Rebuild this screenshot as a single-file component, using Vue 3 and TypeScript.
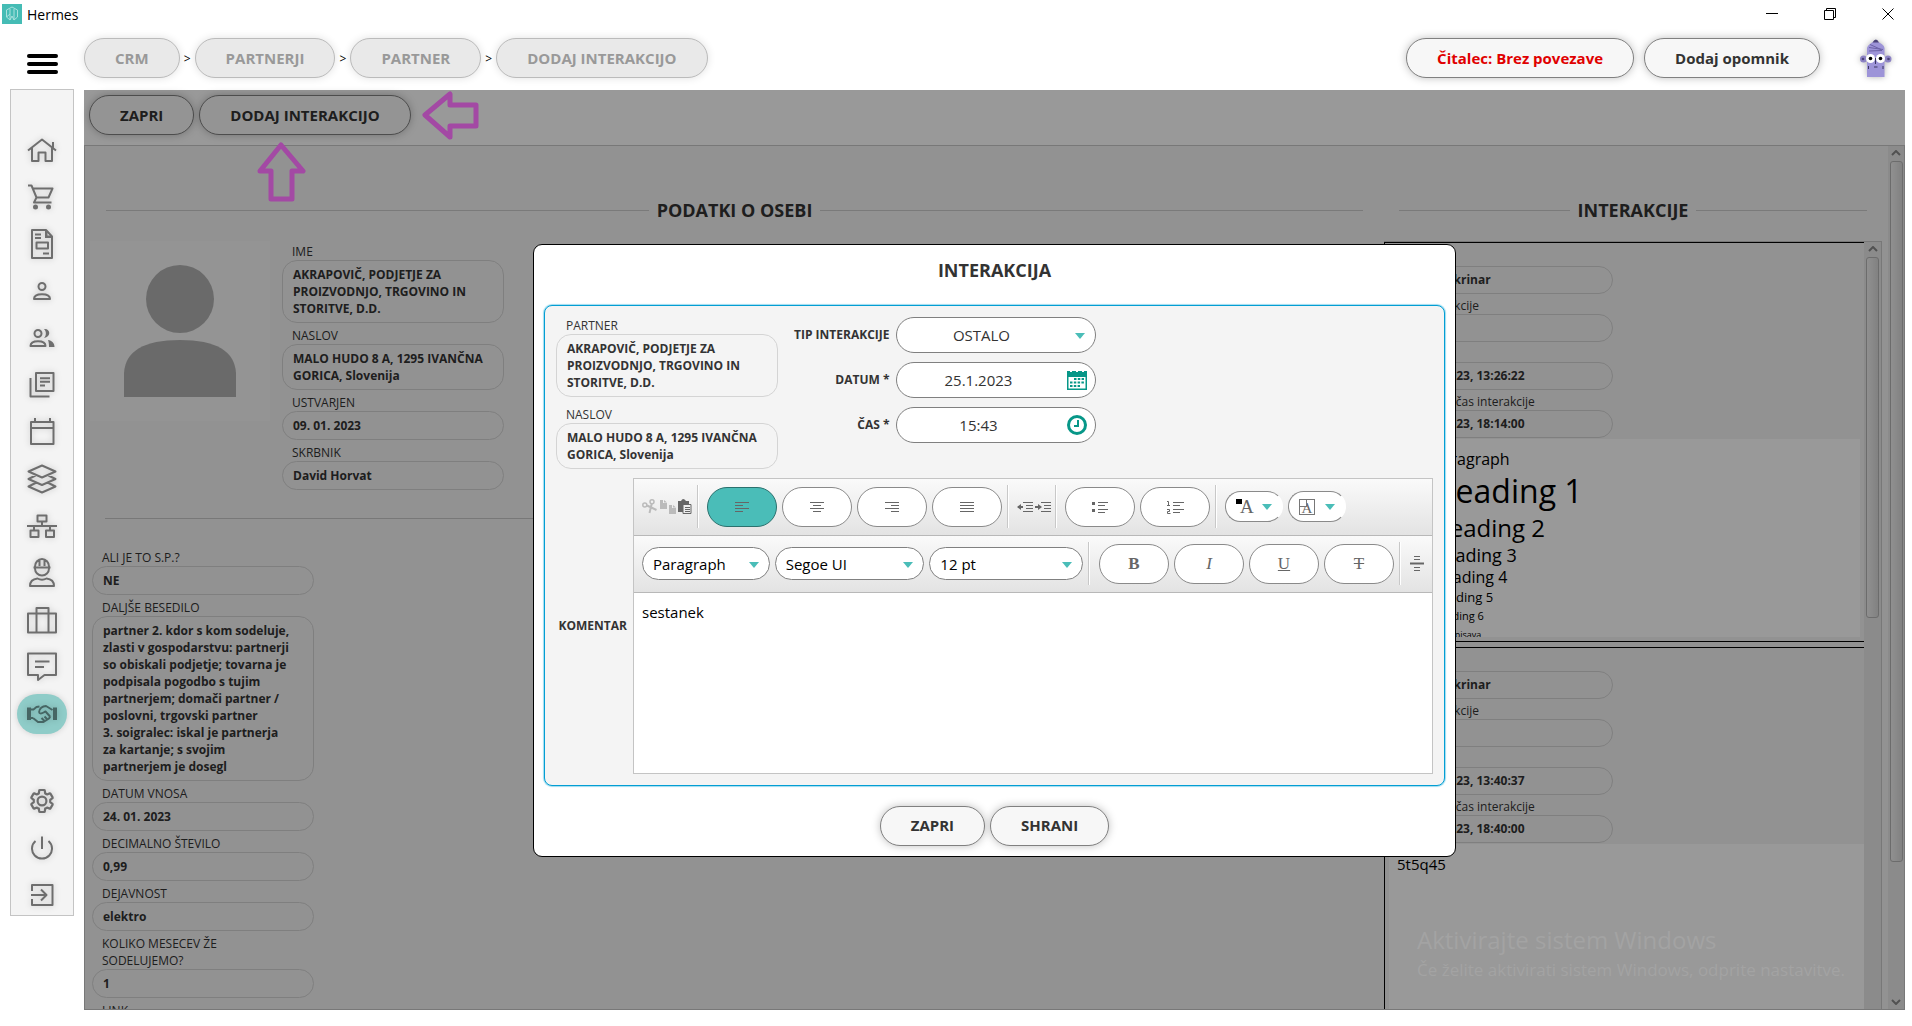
<script setup lang="ts">
import { ref } from 'vue'

interface Field {
  label: string
  value: string
}
interface NavItem {
  name: string
  line?: string
  fill?: string
  active?: boolean
}

const crumbs = ['CRM', 'PARTNERJI', 'PARTNER', 'DODAJ INTERAKCIJO']

const gear =
  'M19.43 12.98c.04-.32.07-.64.07-.98 0-.34-.03-.66-.07-.98l2.11-1.65c.19-.15.24-.42.12-.64l-2-3.46c-.09-.16-.26-.25-.44-.25-.06 0-.12.01-.17.03l-2.49 1c-.52-.4-1.08-.73-1.69-.98l-.38-2.65C14.46 2.18 14.25 2 14 2h-4c-.25 0-.46.18-.49.42l-.38 2.65c-.61.25-1.17.59-1.69.98l-2.49-1c-.06-.02-.12-.03-.18-.03-.17 0-.34.09-.43.25l-2 3.46c-.13.22-.07.49.12.64l2.11 1.65c-.04.32-.07.65-.07.98 0 .33.03.66.07.98l-2.11 1.65c-.19.15-.24.42-.12.64l2 3.46c.09.16.26.25.44.25.06 0 .12-.01.17-.03l2.49-1c.52.4 1.08.73 1.69.98l.38 2.65c.03.24.24.42.49.42h4c.25 0 .46-.18.49-.42l.38-2.65c.61-.25 1.17-.59 1.69-.98l2.49 1c.06.02.12.03.18.03.17 0 .34-.09.43-.25l2-3.46c.12-.22.07-.49-.12-.64l-2.11-1.65z'

const topNav: NavItem[] = [
  { name: 'Domov', line: 'M1 15.500L15 4.500L29 15.500M5 13v13h6.500v-8.500h7V26H25V13M26 12.500V7' },
  {
    name: 'Prodaja',
    line: 'M1 3.500h3.500l5 12h12l4-9H6M9.500 15.500L7 20.500h17.500',
    fill: 'M6 25a2.500 2.500 0 1 0 5 0a2.500 2.500 0 1 0 -5 0M19 25a2.500 2.500 0 1 0 5 0a2.500 2.500 0 1 0 -5 0',
  },
  {
    name: 'Računi',
    line: 'M5 1h14l6 6.500V29H5zM8 5.500h6M8 9h6M9.500 13.500h11.500v6H9.500zM16 24.500h6',
    fill: 'M18 1v8h8l-2-2.500h-3.500V3z',
  },
  { name: 'Oseba', line: 'M11.500 10.500a3.500 3.500 0 1 0 7 0a3.500 3.500 0 1 0 -7 0M7 23c0-3.800 4-4.800 8-4.800s8 1 8 4.800z' },
  {
    name: 'Osebe',
    line: 'M7.500 10.500a3.500 3.500 0 1 0 7 0a3.500 3.500 0 1 0 -7 0M3.500 23c0-3.800 4-4.800 7.500-4.800s7.500 1 7.500 4.800z',
    fill: 'M17 6c6-1 8 7.500 0 9c2.500-2.500 2.500-6.500 0-9M21 17c4 .8 6.500 3 6.500 7H22c0-3-.2-5-1-7',
  },
  { name: 'Članki', line: 'M9 3h17.500v18H9zM3.500 8v18.500H22.500M13 8.200h10M13 11.800h10M13 15.400h5' },
  { name: 'Koledar', line: 'M4 5h22.500v22H4zM4 11h22M8 1v4M23 1v4' },
  {
    name: 'Sloji',
    line: 'M15 1.500L28.500 7.500L15 13.500L1.500 7.500zM8.500 11.500L1.500 15L15 21L28.500 15L21.500 11.500M8.500 19L1.500 22.500L15 28.500L28.500 22.500L21.500 19',
  },
  { name: 'Struktura', line: 'M10.500 4.500h9v6h-9zM0 15h30M15 11v4M7 15v4M23 15v4M3.500 19.500h8v6.500h-8zM19 19.500h8v6.500h-8z' },
  {
    name: 'Delavec',
    line: 'M8 8.500a7 7.500 0 0 1 14 0v2a7 7 0 0 1 -14 0zM6.500 9.500h17M12.500 2v6M17.500 2v6M3 28c0-5 3-7 7.500-7.500q4.500 2.500 9 0c4.500.5 7.500 2.500 7.500 7.500z',
  },
  { name: 'Kovček', line: 'M1 8.500h28v19H1zM9.500 27V3h12v24' },
  { name: 'Sporočila', line: 'M1 1.500h28v21.500H17.500l-6.500 5v-5H1zM8 9.500h14.500M8 15h9' },
  {
    name: 'Partnerji',
    line: 'M4 10.500h2.500l3-2.500l3-.5M6 19l5 4h5.500l5.500-3.500l1.500-2.500M12 13.500c0-4 3.500-6.500 7-6.500l6.500 4M12 13.500c2 2.500 4 0 6.500-1l4.500 5M14.500 19l3 3M17.500 17.500l3 3M4 19h2',
    fill: 'M0 8.500h4v12.500H0zM26 8.500h4v12.500h-4z',
    active: true,
  },
]
const bottomNav: NavItem[] = [
  { name: 'Nastavitve' },
  { name: 'Odjava', line: 'M8.500 8a10 10 0 1 0 13 0M15 3.500v12.500' },
  { name: 'Izhod', line: 'M5 11V5h20.500v20H5v-6M4 15h15M14 9.500l5.500 5.500l-5.500 5.500' },
]

const personFields: Field[] = [
  { label: 'IME', value: 'AKRAPOVIČ, PODJETJE ZA PROIZVODNJO, TRGOVINO IN STORITVE, D.D.' },
  { label: 'NASLOV', value: 'MALO HUDO 8 A, 1295 IVANČNA GORICA, Slovenija' },
  { label: 'USTVARJEN', value: '09. 01. 2023' },
  { label: 'SKRBNIK', value: 'David Horvat' },
]
const modalFields: Field[] = [
  { label: 'PARTNER', value: personFields[0].value },
  { label: 'NASLOV', value: personFields[1].value },
]
const detailFields: Field[] = [
  { label: 'ALI JE TO S.P.?', value: 'NE' },
  {
    label: 'DALJŠE BESEDILO',
    value:
      'partner 2. kdor s kom sodeluje, zlasti v gospodarstvu: partnerji so obiskali podjetje; tovarna je podpisala pogodbo s tujim partnerjem; domači partner / poslovni, trgovski partner\n3. soigralec: iskal je partnerja\nza kartanje; s svojim\npartnerjem je dosegl',
  },
  { label: 'DATUM VNOSA', value: '24. 01. 2023' },
  { label: 'DECIMALNO ŠTEVILO', value: '0,99' },
  { label: 'DEJAVNOST', value: 'elektro' },
  { label: 'KOLIKO MESECEV ŽE SODELUJEMO?', value: '1' },
  { label: 'LINK', value: '' },
]

const cardFields = (created: string, time: string): Field[] => [
  { label: 'Avtor', value: 'Mateja Škrinar' },
  { label: 'Tip interakcije', value: 'Ostalo' },
  { label: 'Vnos', value: created },
  { label: 'Datum in čas interakcije', value: time },
]
const firstCard = cardFields('24. 01. 2023, 13:26:22', '24. 01. 2023, 18:14:00')
const secondCard = cardFields('24. 01. 2023, 13:40:37', '24. 01. 2023, 18:40:00')

const aligns = [
  { name: 'Levo', d: 'M0 .5h14M0 3.500h8M0 6.500h14M0 9.500h8' },
  { name: 'Sredina', d: 'M0 .5h14M3 3.500h8M0 6.500h14M3 9.500h8' },
  { name: 'Desno', d: 'M0 .5h14M6 3.500h8M0 6.500h14M6 9.500h8' },
  { name: 'Obojestransko', d: 'M0 .5h14M0 3.500h14M0 6.500h14M0 9.500h14' },
]
const align = ref('Levo')
const comment = ref('sestanek')
const date = ref('25.1.2023')
const time = ref('15:43')
</script>

<template>
  <div class="app">
    <header class="titlebar">
      <svg class="logo" viewBox="0 0 20 20" width="20" height="20">
        <rect width="20" height="20" fill="#45bcb5" />
        <path d="M10 3L4.500 6v7L8 16V5M8 16l2-4l2 4V5M10 3l5.500 3v7L12 16M4.500 13L8 10" fill="none" stroke="#a9e2de" />
      </svg>
      <span class="app-name">Hermes</span>
      <div class="window-controls">
        <button aria-label="Pomanjšaj"><svg width="12" height="12"><path d="M0 5.500h12" /></svg></button>
        <button aria-label="Obnovi"><svg width="12" height="12"><path d="M.5 2.500h9v9h-9zM2.500 2.500v-2h9v9h-2" /></svg></button>
        <button aria-label="Zapri okno"><svg width="12" height="12"><path d="M.5 .5l11 11M11.500 .5l-11 11" /></svg></button>
      </div>
    </header>

    <div class="topbar">
      <button class="menu" aria-label="Meni"><i></i><i></i><i></i></button>
      <nav class="crumbs">
        <template v-for="(c, i) in crumbs" :key="c">
          <span v-if="i" class="crumb-sep">&gt;</span>
          <button class="pill crumb">{{ c }}</button>
        </template>
      </nav>
      <div class="top-actions">
        <button class="pill alert">Čitalec: Brez povezave</button>
        <button class="pill">Dodaj opomnik</button>
        <svg class="mascot" width="32" height="38" viewBox="0 0 32 38">
          <circle cx="3.500" cy="20" r="3.500" fill="#8d83c4" />
          <circle cx="28" cy="20" r="3.500" fill="#8d83c4" />
          <circle cx="3" cy="20" r="1.300" fill="#4b4379" />
          <circle cx="28.500" cy="20" r="1.300" fill="#4b4379" />
          <path d="M7 38V9q1-4 8.500-7Q24 5 24.500 9v29z" fill="#9d94d8" />
          <path d="M12.500 3.500q3.500-6 6.500 0z" fill="#4b4379" />
          <path d="M9 8.500l14 2M10 5.500l11 5M9 12l13-.5" fill="none" stroke="#6b61a6" />
          <circle cx="10.500" cy="19.500" r="4.500" fill="#fff" />
          <circle cx="20.500" cy="19.500" r="4.500" fill="#fff" />
          <circle cx="10.500" cy="19.500" r="1.800" />
          <circle cx="20.500" cy="19.500" r="1.800" />
          <path d="M15.500 19v6M14 28h3.500M8.500 27v3M23 27v3" fill="none" stroke="#3a3461" />
        </svg>
      </div>
    </div>

    <div class="body">
      <nav class="sidebar">
        <button v-for="n in topNav" :key="n.name" :aria-label="n.name" :class="{ active: n.active }">
          <svg width="30" height="30" viewBox="0 0 30 30">
            <path class="line" :d="n.line" />
            <path v-if="n.fill" class="solid" :d="n.fill" />
          </svg>
        </button>
        <span class="nav-gap"></span>
        <button v-for="n in bottomNav" :key="n.name" :aria-label="n.name">
          <svg width="30" height="30" viewBox="0 0 30 30">
            <path v-if="n.line" class="line" :d="n.line" />
            <g v-else transform="translate(1.800 1.800) scale(1.100)">
              <path class="line" :d="gear" />
              <circle class="line" cx="12" cy="12" r="4" />
            </g>
          </svg>
        </button>
      </nav>

      <main class="main">
        <div class="toolbar">
          <button class="pill">ZAPRI</button>
          <button class="pill">DODAJ INTERAKCIJO</button>
        </div>

        <div class="content">
          <div class="columns">
            <section class="person">
              <h2 class="section-title">PODATKI O OSEBI</h2>
              <div class="profile">
                <svg class="photo" width="180" height="180" viewBox="0 0 180 180">
                  <rect width="180" height="180" fill="#f7f7f7" />
                  <circle cx="90" cy="58" r="34" fill="#b1b1b1" />
                  <path d="M34 156v-24q2-33 56-33t56 33v24z" fill="#b1b1b1" />
                </svg>
                <dl class="fields">
                  <div v-for="f in personFields" :key="f.label">
                    <dt>{{ f.label }}</dt>
                    <dd>{{ f.value }}</dd>
                  </div>
                </dl>
              </div>
              <dl class="fields details">
                <div v-for="f in detailFields" :key="f.label">
                  <dt>{{ f.label }}</dt>
                  <dd>{{ f.value }}</dd>
                </div>
              </dl>
            </section>

            <section class="interactions">
              <h2 class="section-title">INTERAKCIJE</h2>
              <div class="list">
                <div class="cards">
                  <article class="card">
                    <dl class="fields compact">
                      <div v-for="f in firstCard" :key="f.label">
                        <dt>{{ f.label }}</dt>
                        <dd>{{ f.value }}</dd>
                      </div>
                    </dl>
                    <div class="rich sample">
                      <p>Paragraph</p>
                      <h1>Heading 1</h1>
                      <h2>Heading 2</h2>
                      <h3>Heading 3</h3>
                      <h4>Heading 4</h4>
                      <h5>Heading 5</h5>
                      <h6>Heading 6</h6>
                      <small>Mala pisava</small>
                    </div>
                  </article>
                  <article class="card tall">
                    <dl class="fields compact">
                      <div v-for="f in secondCard" :key="f.label">
                        <dt>{{ f.label }}</dt>
                        <dd>{{ f.value }}</dd>
                      </div>
                    </dl>
                    <div class="rich note"><p>5t5q45</p></div>
                  </article>
                </div>
                <div class="scroll inner">
                  <svg width="10" height="6"><path d="M1 5l4-4l4 4" /></svg>
                  <span class="thumb"></span>
                </div>
              </div>
            </section>
          </div>
          <div class="scroll outer">
            <svg width="10" height="6"><path d="M1 5l4-4l4 4" /></svg>
            <span class="thumb"></span>
            <svg class="down" width="10" height="6"><path d="M1 1l4 4l4-4" /></svg>
          </div>
        </div>

        <div class="overlay">
          <form class="modal" role="dialog" aria-label="Interakcija" @submit.prevent>
            <h2>INTERAKCIJA</h2>
            <div class="panel">
              <div class="panel-top">
                <dl class="fields spaced">
                  <div v-for="f in modalFields" :key="f.label">
                    <dt>{{ f.label }}</dt>
                    <dd>{{ f.value }}</dd>
                  </div>
                </dl>
                <div class="inputs">
                  <label for="kind">TIP INTERAKCIJE</label>
                  <div class="control">
                    <select id="kind"><option>OSTALO</option></select>
                    <svg class="caret" width="10" height="6"><path d="M0 0h10l-5 6z" /></svg>
                  </div>
                  <label for="date">DATUM *</label>
                  <div class="control">
                    <input id="date" v-model="date" type="text" />
                    <button class="glyph" type="button" aria-label="Koledar">
                      <svg width="20" height="20" viewBox="0 0 20 20">
                        <path d="M0 1h3v1h2V1h4v1h2V1h4v1h2V1h3v19H0zM1.500 7v11.500h17V7z" fill="#079788" fill-rule="evenodd" />
                        <path d="M7 9h10M3 12.500h14M3 16h10" fill="none" stroke="#079788" stroke-width="2" stroke-dasharray="2.500 1.300" />
                      </svg>
                    </button>
                  </div>
                  <label for="time">ČAS *</label>
                  <div class="control">
                    <input id="time" v-model="time" type="text" />
                    <button class="glyph" type="button" aria-label="Ura">
                      <svg width="20" height="20" viewBox="0 0 20 20">
                        <circle cx="10" cy="10" r="8.500" fill="none" stroke="#079788" stroke-width="3" />
                        <path d="M11 5v6H7" fill="none" stroke="#079788" stroke-width="2" />
                      </svg>
                    </button>
                  </div>
                </div>
              </div>

              <div class="comment">
                <label for="comment">KOMENTAR</label>
                <div class="editor">
                  <div class="bar">
                    <div class="clip">
                      <button type="button" aria-label="Izreži">
                        <svg width="15" height="16" viewBox="0 0 15 16"><path d="M5 6.500l9.500 4.500M9.800 4.500L7.500 14" stroke="#bbb" stroke-width="2" fill="none" /><circle cx="2.800" cy="6" r="2" stroke="#bbb" stroke-width="1.500" fill="none" /><circle cx="10" cy="2.800" r="2" stroke="#bbb" stroke-width="1.500" fill="none" /></svg>
                      </button>
                      <button type="button" aria-label="Kopiraj">
                        <svg width="17" height="16" viewBox="0 0 17 16"><path d="M1 1h3v3h4v6H1zM5 1l3 2.500H5zM10 6h3v3h4v6h-7zM14 6l3 2.500h-3z" fill="#bbb" /></svg>
                      </button>
                      <button type="button" aria-label="Prilepi">
                        <svg width="14" height="16" viewBox="0 0 14 16"><path d="M0 2h3q2-4 5 0h3v3H5v8H0z" fill="#666" /><path d="M5 5.500h8v9H5zM7 8.500h5M7 10.500h5M7 12.500h5" fill="none" stroke="#666" /></svg>
                      </button>
                    </div>
                    <i class="sep"></i>
                    <button
                      v-for="a in aligns"
                      :key="a.name"
                      type="button"
                      class="tool"
                      :class="{ on: align === a.name }"
                      :aria-label="a.name"
                      @click="align = a.name"
                    >
                      <svg width="14" height="10"><path :d="a.d" /></svg>
                    </button>
                    <i class="sep"></i>
                    <div class="indent">
                      <button type="button" aria-label="Zmanjšaj zamik">
                        <svg width="16" height="10"><path d="M6 .5h10M9 3.500h7M9 6.500h7M6 9.500h10" /><path d="M1 5h5" stroke-width="2" /><path d="M0 5l4-3v6z" class="fill" /></svg>
                      </button>
                      <button type="button" aria-label="Povečaj zamik">
                        <svg width="16" height="10"><path d="M6 .5h10M9 3.500h7M9 6.500h7M6 9.500h10" /><path d="M0 5h5" stroke-width="2" /><path d="M7 5l-4-3v6z" class="fill" /></svg>
                      </button>
                    </div>
                    <i class="sep"></i>
                    <button type="button" class="tool" aria-label="Seznam">
                      <svg width="16" height="12"><path d="M6 1.500h10M6 4.500h7M6 8.500h10M6 11.500h7" /><path d="M0 1h3v3H0zM0 8h3v3H0z" class="fill" /></svg>
                    </button>
                    <button type="button" class="tool" aria-label="Oštevilčen seznam">
                      <svg width="17" height="14"><path d="M6 2.500h11M6 5.500h7M6 9.500h11M6 12.500h7M0 1.500h1.500v4M0 5.500h3M0 9.500h2.500v2H.5v2H3.500" /></svg>
                    </button>
                    <i class="sep"></i>
                    <button type="button" class="picker" aria-label="Barva pisave">
                      <i class="swatch"></i><span class="serif">A</span>
                      <svg class="caret" width="10" height="6"><path d="M0 0h10l-5 6z" /></svg>
                    </button>
                    <button type="button" class="picker" aria-label="Barva ozadja">
                      <span class="serif boxed">A</span>
                      <svg class="caret" width="10" height="6"><path d="M0 0h10l-5 6z" /></svg>
                    </button>
                  </div>
                  <div class="bar second">
                    <div class="control small para">
                      <select aria-label="Slog"><option>Paragraph</option></select>
                      <svg class="caret" width="10" height="6"><path d="M0 0h10l-5 6z" /></svg>
                    </div>
                    <div class="control small family">
                      <select aria-label="Pisava"><option>Segoe UI</option></select>
                      <svg class="caret" width="10" height="6"><path d="M0 0h10l-5 6z" /></svg>
                    </div>
                    <div class="control small size">
                      <select aria-label="Velikost"><option>12 pt</option></select>
                      <svg class="caret" width="10" height="6"><path d="M0 0h10l-5 6z" /></svg>
                    </div>
                    <i class="sep"></i>
                    <button type="button" class="tool serif"><b>B</b></button>
                    <button type="button" class="tool serif"><em>I</em></button>
                    <button type="button" class="tool serif"><u>U</u></button>
                    <button type="button" class="tool serif"><s>T</s></button>
                    <i class="sep"></i>
                    <button type="button" class="rule" aria-label="Črta">
                      <svg width="14" height="15"><path d="M4 .5h6M4 3.500h6M4 11.500h6M4 14.500h6" /><path d="M0 7.500h14" stroke-width="2" /></svg>
                    </button>
                  </div>
                  <textarea id="comment" v-model="comment"></textarea>
                </div>
              </div>
            </div>
            <footer>
              <button class="pill" type="button">ZAPRI</button>
              <button class="pill">SHRANI</button>
            </footer>
          </form>
        </div>

        <svg class="hint left" width="57" height="49" viewBox="0 0 57 49"><path d="M3 24L28 3v11h26v21H28v11z" /></svg>
        <svg class="hint up" width="49" height="60" viewBox="0 0 49 60"><path d="M24 3L46 29H35v28H14V29H3z" /></svg>
        <div class="watermark">
          <p>Aktivirajte sistem Windows</p>
          <span>Če želite aktivirati sistem Windows, odprite nastavitve.</span>
        </div>
      </main>
    </div>
  </div>
</template>

<style>
body {
  margin: 0;
  background: #fff;
}
</style>

<style scoped>
* {
  box-sizing: border-box;
}
.app {
  display: flex;
  flex-direction: column;
  height: 100vh;
  padding-bottom: 16px;
  overflow: hidden;
  color: #333;
  font-family: 'Open Sans', 'Noto Sans', sans-serif;
  font-size: 13px;
  line-height: 17px;
}
h1, h2, h3, h4, h5, h6, p, dl, dd, dt {
  margin: 0;
}
button {
  margin: 0;
  padding: 0;
  border: 0;
  background: none;
  color: inherit;
  font: inherit;
}
svg {
  display: block;
}

/* window frame */
.titlebar {
  display: flex;
  align-items: center;
  gap: 5px;
  height: 28px;
  flex: none;
  padding: 0 18px 0 2px;
  color: #000;
}
.app-name {
  font-size: 14px;
}
.window-controls {
  display: flex;
  gap: 46px;
  margin-left: auto;
}
.window-controls path {
  fill: none;
  stroke: #000;
}

/* top navigation */
.topbar {
  display: flex;
  align-items: center;
  height: 62px;
  flex: none;
  padding: 0 20px 2px 27px;
}
.menu {
  display: grid;
  gap: 4px;
  width: 31px;
  margin: 12px 26px 0 0;
}
.menu i {
  height: 4px;
  border-radius: 2px;
  background: #000;
}
.crumbs,
.top-actions {
  display: flex;
  align-items: center;
}
.top-actions {
  gap: 10px;
  margin-left: auto;
}
.crumb-sep {
  width: 15px;
  color: #000;
  font-size: 12px;
  text-align: center;
}
.pill {
  height: 40px;
  padding: 0 30px;
  border: 1px solid #808080;
  border-radius: 20px;
  background: #f7f7f7;
  box-shadow: 0 0 8px rgba(0, 0, 0, 0.25);
  color: #333;
  font-size: 15px;
  font-weight: 700;
  white-space: nowrap;
}
.crumb {
  border-color: #bbb;
  background: #e9e9e9;
  box-shadow: 0 0 8px rgba(0, 0, 0, 0.12);
  color: #999;
}
.alert {
  color: #e00000;
}
.mascot {
  margin-left: 30px;
  filter: drop-shadow(0 0 3px rgba(0, 0, 0, 0.3));
}

/* side navigation */
.body {
  display: flex;
  align-items: flex-start;
  flex: 1;
  min-height: 0;
  padding: 0 7px 0 10px;
}
.sidebar {
  display: flex;
  flex-direction: column;
  align-items: center;
  gap: 7px;
  width: 64px;
  flex: none;
  margin: -1px 10px 0 0;
  padding-top: 40px;
  border: 1px solid #c4c4c4;
  background: #f4f4f4;
}
.sidebar button {
  display: grid;
  place-items: center;
  width: 50px;
  height: 40px;
  border-radius: 20px;
}
.sidebar svg {
  overflow: visible;
  filter: drop-shadow(0 0 3px rgba(0, 0, 0, 0.2));
}
.sidebar .active {
  background: #8fccc8;
  box-shadow: 0 0 6px rgba(0, 0, 0, 0.15);
}
.nav-gap {
  height: 33px;
}
.line {
  fill: none;
  stroke: #6e6e6e;
  stroke-width: 2;
  stroke-linejoin: round;
}
.solid {
  fill: #6e6e6e;
}
.active .line {
  stroke: #466664;
}
.active .solid {
  fill: #466664;
}

/* page */
.main {
  position: relative;
  display: flex;
  flex-direction: column;
  flex: 1;
  min-width: 0;
  height: 100%;
}
.toolbar {
  display: flex;
  gap: 5px;
  height: 55px;
  flex: none;
  padding: 5px;
}
.content {
  display: flex;
  flex: 1;
  min-height: 0;
  overflow: hidden;
  border: 1px solid #c8c8c8;
  background: #f4f4f4;
}
.columns {
  display: flex;
  flex: 1;
  min-width: 0;
}
.person {
  flex: 1;
  min-width: 0;
}
.interactions {
  display: flex;
  flex-direction: column;
  width: 498px;
  flex: none;
  margin-right: 6px;
}
.section-title {
  display: flex;
  align-items: center;
  gap: 8px;
  margin: 52px 21px 19px;
  font-size: 18px;
  font-weight: 700;
  line-height: 24px;
}
.interactions .section-title {
  margin: 52px 15px 19px;
}
.section-title::before,
.section-title::after {
  content: '';
  flex: 1;
  height: 1px;
  background: #ccc;
}
.profile {
  display: flex;
  gap: 12px;
  margin-left: 5px;
  padding-bottom: 28px;
}
.profile .fields {
  margin-top: 2px;
}
.fields {
  display: flex;
  flex-direction: column;
  gap: 4px;
  width: 222px;
}
.fields.spaced {
  gap: 9px;
}
dt {
  padding: 0 30px 0 10px;
  font-size: 12px;
}
dd {
  min-height: 29px;
  padding: 5px 10px;
  border: 1px solid #d4d4d4;
  border-radius: 15px;
  font-size: 12px;
  font-weight: 700;
  white-space: pre-line;
}
.details {
  width: auto;
  padding: 31px 0 0 7px;
  position: relative;
}
.details::before {
  content: '';
  position: absolute;
  top: 0;
  right: 21px;
  left: 20px;
  height: 1px;
  background: #c8c8c8;
}
.details > div {
  width: 222px;
}
.compact {
  gap: 3px;
  padding: 6px 0 1px 6px;
  width: 228px;
}
.compact dd {
  min-height: 28px;
  line-height: 16px;
}
.list {
  display: flex;
  flex: 1;
  min-height: 0;
  border-top: 1px solid #c8c8c8;
  border-right: 1px solid #c8c8c8;
}
.cards {
  flex: 1;
  overflow: hidden;
}
.card {
  display: flex;
  flex-direction: column;
  height: 400px;
  margin-bottom: 5px;
  padding-bottom: 4px;
  border: 1px solid #000;
  border-right: 0;
}
.tall {
  height: 600px;
}
.rich {
  flex: 1;
  min-height: 0;
  margin-left: 4px;
  padding: 8px;
  overflow: hidden;
  background: #fff;
  color: #000;
  font-size: 16px;
}
.rich p {
  line-height: 24px;
}
.rich h1, .rich h2, .rich h3, .rich h4, .rich h5, .rich h6 {
  font-weight: 400;
}
.sample {
  margin-right: 4px;
  padding-left: 43px;
}
.note {
  font-size: 15px;
}
.rich h1 { font-size: 32px; line-height: 40px; }
.rich h2 { font-size: 24px; line-height: 34px; }
.rich h3 { font-size: 18px; line-height: 20px; }
.rich h4 { font-size: 16px; line-height: 24px; }
.rich h5 { font-size: 13px; line-height: 16px; }
.rich h6 { font-size: 11px; line-height: 22px; }
.rich small { display: block; font-size: 9px; line-height: 16px; }

/* scroll tracks */
.scroll {
  display: flex;
  flex-direction: column;
  align-items: center;
  flex: none;
  width: 17px;
  padding: 4px 0;
  gap: 5px;
  background: #e8e8e8;
}
.outer {
  width: 16px;
}
.scroll path {
  fill: none;
  stroke: #888;
  stroke-width: 2;
}
.thumb {
  width: 13px;
  border: 1px solid #b4b4b4;
  border-radius: 3px;
  background: linear-gradient(90deg, #f0f0f0, #d8d8d8);
}
.inner .thumb {
  height: 361px;
}
.outer .thumb {
  height: 82%;
}
.down {
  margin-top: auto;
}

/* dialog */
.overlay {
  position: absolute;
  inset: 0;
  display: grid;
  place-items: center;
  background: rgba(0, 0, 0, 0.4);
}
.modal {
  width: 923px;
  max-width: 100%;
  padding: 10px;
  border: 1px solid #000;
  border-radius: 9px;
  background: #fff;
}
.modal > h2 {
  margin: 3px 0 23px;
  font-size: 18px;
  font-weight: 700;
  line-height: 24px;
  text-align: center;
}
.panel {
  padding: 11px;
  border: 1px solid #039ed3;
  border-radius: 8px;
  background: #f4f4f4;
  box-shadow: 0 0 1px 1px #9fdcf0;
}
.panel-top {
  display: flex;
  gap: 16px;
}
.inputs {
  display: grid;
  grid-template-columns: auto 200px;
  grid-auto-rows: 36px;
  align-items: center;
  gap: 9px 7px;
}
.inputs label,
.comment label {
  font-size: 12px;
  font-weight: 700;
  text-align: right;
}
.control {
  position: relative;
}
.control select,
.control input {
  width: 100%;
  height: 36px;
  padding: 0 30px 0 0;
  border: 1px solid #808080;
  border-radius: 18px;
  outline: 0;
  background: #fff;
  color: #333;
  font-family: inherit;
  font-size: 15px;
  text-align: center;
  text-align-last: center;
  appearance: none;
}
.control input {
  padding-right: 36px;
}
.control .caret {
  position: absolute;
  top: 50%;
  right: 11px;
  margin-top: -2px;
}
.caret {
  fill: #4abdb8;
}
.glyph {
  position: absolute;
  top: 8px;
  right: 9px;
}
.comment {
  display: flex;
  align-items: center;
  margin-top: 9px;
}
.comment label {
  width: 71px;
  flex: none;
  margin-right: 6px;
}
.editor {
  display: flex;
  flex-direction: column;
  flex: 1;
  min-width: 0;
  height: 296px;
  border: 1px solid #c4c4c4;
  background: #fff;
}
.bar {
  display: flex;
  align-items: center;
  gap: 5px;
  height: 57px;
  flex: none;
  padding: 0 8px;
  border-bottom: 1px solid #b8b8b8;
  background: linear-gradient(#fafafa, #e3e3e3);
}
.bar path {
  fill: none;
  stroke: #666;
}
.bar .clip path[fill='#bbb'] { fill: #bbb; stroke: none; }
.bar .clip path[stroke='#bbb'] { stroke: #bbb; }
.bar .clip path[fill='#666'] { fill: #666; stroke: none; }
.bar path.fill {
  fill: #666;
  stroke: none;
}
.bar .caret path {
  fill: #4abdb8;
  stroke: none;
}
.clip,
.indent {
  display: flex;
  gap: 2px;
}
.sep {
  width: 2px;
  height: 43px;
  margin-right: 3px;
  border-left: 1px solid #c8c8c8;
  background: #fff;
}
.second .sep {
  margin-right: 4px;
}
.indent {
  margin-right: -1px;
}
.tool {
  display: grid;
  place-items: center;
  width: 70px;
  height: 40px;
  flex: none;
  border: 1px solid #8a8a8a;
  border-radius: 20px;
  background: #fff;
}
.tool.on {
  border-color: #2b716e;
  background: #4abdb8;
}
.serif {
  color: #666;
  font-family: 'Liberation Serif', serif;
  font-size: 17px;
}
.picker {
  display: flex;
  align-items: center;
  width: 58px;
  height: 31px;
  padding: 0 10px;
  border: 1px solid #8a8a8a;
  border-right-color: #fff;
  border-radius: 16px;
  background: #fff;
}
.picker .caret {
  margin-left: auto;
}
.swatch {
  align-self: flex-start;
  width: 6px;
  height: 5px;
  margin: 7px -2px 0 0;
  background: #000;
}
.picker .serif {
  font-size: 19px;
}
.boxed {
  position: relative;
  width: 16px;
  height: 16px;
  border: 1px solid #777;
  line-height: 16px;
  text-align: center;
}
.picker .boxed {
  font-size: 15px;
}
.boxed::before {
  content: '';
  position: absolute;
  top: -1px;
  left: -1px;
  width: 6px;
  height: 6px;
  border: 1px solid #777;
  background: #fff;
}
.small select {
  height: 33px;
  padding: 0 28px 0 10px;
  border-radius: 17px;
  color: #000;
  text-align: left;
  text-align-last: left;
}
.para { width: 128px; }
.family { width: 150px; }
.size { width: 154px; }
textarea {
  flex: 1;
  padding: 7px 8px;
  border: 0;
  outline: 0;
  resize: none;
  background: #fff;
  color: #000;
  font-family: inherit;
  font-size: 15px;
  line-height: 24px;
}
footer {
  display: flex;
  justify-content: center;
  gap: 5px;
  margin-top: 20px;
}

/* annotations over the page */
.hint {
  position: absolute;
}
.hint path {
  fill: none;
  stroke: #a349a4;
  stroke-width: 5;
  stroke-linejoin: round;
}
.hint.left {
  top: 1px;
  left: 338px;
}
.hint.up {
  top: 52px;
  left: 173px;
}
.watermark {
  position: absolute;
  right: 60px;
  bottom: 27px;
  color: #a3a3a3;
  font-size: 17px;
  line-height: 26px;
}
.watermark p {
  font-size: 24px;
  line-height: 34px;
}
</style>
